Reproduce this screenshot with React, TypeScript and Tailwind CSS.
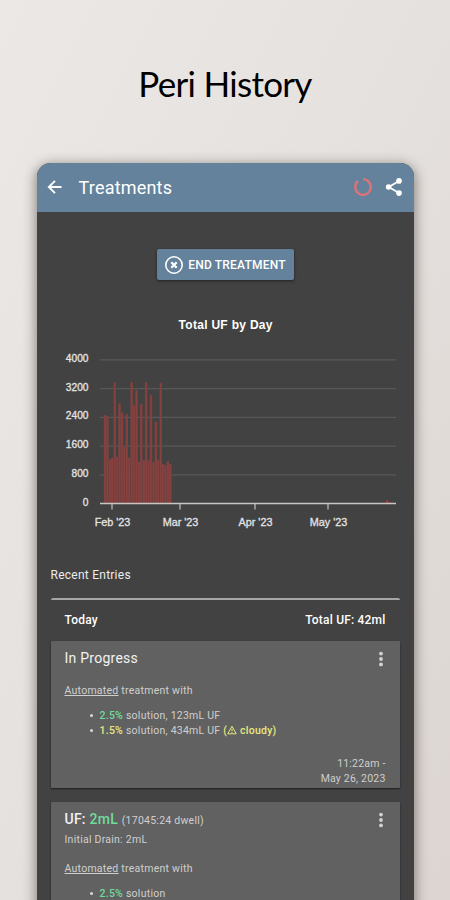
import { ReactNode } from 'react';

const DAILY_UF = [
  2460, 2430, 1235, 1270, 3385, 1300, 2785, 2535, 1560, 2485, 1280, 3385, 2740, 3155, 1160, 2765,
  1205, 3385, 1205, 3015, 1150, 2275, 1205, 3360, 1095, 1065, 1180, 1095,
];

const Y_TICKS = [4000, 3200, 2400, 1600, 800, 0];

const X_TICKS = [
  { label: "Feb '23", x: 75.5 },
  { label: "Mar '23", x: 143.5 },
  { label: "Apr '23", x: 218.5 },
  { label: "May '23", x: 291.5 },
];

const BASELINE = 193.5;
const yFor = (value: number) => BASELINE - (value * 143.6) / 4000;

function UfChart() {
  return (
    <svg viewBox="0 0 377 230" className="block h-[230px] w-full font-['Liberation_Sans',sans-serif]">
      <text x="188.5" y="19" textAnchor="middle" textLength="94" className="fill-white text-[12px] font-bold">
        Total UF by Day
      </text>
      {Y_TICKS.map((tick) => (
        <g key={tick}>
          <text
            x="51.5"
            y={yFor(tick) + 2}
            textAnchor="end"
            className="fill-[#e4e4e4] stroke-[#e4e4e4] stroke-[0.3] text-[10.2px]"
          >
            {tick}
          </text>
          {tick > 0 && <path d={`M63 ${yFor(tick)}H359`} stroke="#585858" strokeWidth="1.3" />}
        </g>
      ))}
      {DAILY_UF.map((value, i) => (
        <g key={i}>
          <rect x={66.8 + i * 2.42} y={yFor(value)} width="2.42" height={BASELINE - yFor(value)} fill="#7a403e" />
          <rect x={67.3 + i * 2.42} y={yFor(value)} width="1.5" height={BASELINE - yFor(value)} fill="#87413f" />
        </g>
      ))}
      <path d="M349 193v-3h2v2h3v1z" fill="#963b3a" />
      <path d={`M63 ${BASELINE}H359`} stroke="#c8c5c2" strokeWidth="1.4" />
      {X_TICKS.map((tick) => (
        <g key={tick.label}>
          <path d={`M${tick.x - 0.5} 194v5.5`} stroke="#c4c4c4" strokeWidth="1.2" />
          <text
            x={tick.x}
            y="215.5"
            textAnchor="middle"
            className="fill-[#e4e4e4] stroke-[#e4e4e4] stroke-[0.3] text-[10.8px]"
          >
            {tick.label}
          </text>
        </g>
      ))}
    </svg>
  );
}

function MoreIcon() {
  return (
    <svg viewBox="0 0 6 16" className="h-4 w-1.5 fill-[#d2d2d2]">
      <circle cx="3" cy="2.6" r="1.9" />
      <circle cx="3" cy="8" r="1.9" />
      <circle cx="3" cy="13.4" r="1.9" />
    </svg>
  );
}

function Entry({ title, children }: { title: ReactNode; children: ReactNode }) {
  return (
    <div className="h-[147px] rounded-[1px] bg-[#616161] pl-3.5 pr-3.5 shadow-[0_1px_2px_rgba(0,0,0,0.55)]">
      <div className="flex items-start justify-between pt-[9px] pr-0.5">
        <div className="text-[14px] leading-4 tracking-[0.25px] text-[#f2f2f2]">{title}</div>
        <div className="pt-px">
          <MoreIcon />
        </div>
      </div>
      {children}
    </div>
  );
}

export default function App() {
  return (
    <div className="flex h-[900px] w-[450px] flex-col overflow-hidden bg-linear-to-br from-[#ebe8e5] via-[#e5e1de] to-[#dcd5d1] font-[Roboto,sans-serif]">
      <h1 className="flex h-[163px] shrink-0 items-start justify-center pt-[61px] font-[Lato,sans-serif] text-[35px] leading-[44px] text-black">
        <span className="tracking-[-0.7px] whitespace-nowrap">Peri History</span>
      </h1>

      <div className="mx-auto h-[760px] w-[377px] shrink-0 overflow-hidden rounded-t-[14px] bg-[#424242] shadow-[0_3px_12px_2px_rgba(60,50,45,0.5)]">
        {/* App bar */}
        <header className="flex h-[49px] items-center bg-[#64829c] pr-[11px] pb-px pl-2.5 text-white">
          <svg viewBox="0 0 16 16" className="size-4" fill="none" stroke="currentColor" strokeWidth="1.9">
            <path d="M14.5 8H2M8 1.8 1.8 8 8 14.2" />
          </svg>
          <div className="ml-4 flex-1 text-[18px] tracking-[0.2px]">Treatments</div>
          <svg viewBox="0 0 20 20" className="size-5" fill="none" stroke="#d97478" strokeWidth="2.3">
            <path d="M10.2 2.2A7.8 7.8 0 1 1 5 4" />
          </svg>
          <svg viewBox="0 0 18 20" className="ml-3 h-5 w-[18px]" fill="currentColor">
            <path d="M3.8 10 14 4M3.8 10 14 16" stroke="currentColor" strokeWidth="1.8" />
            <circle cx="3.6" cy="10" r="2.8" />
            <circle cx="14" cy="3.9" r="2.8" />
            <circle cx="14" cy="16.1" r="2.8" />
          </svg>
        </header>

        <div className="flex justify-center pt-[37px]">
          <button className="flex h-[31px] w-[137px] items-center justify-center gap-1 rounded-[2px] bg-[#64829c] text-[12px] font-medium tracking-[0.2px] whitespace-nowrap text-white shadow-[0_1px_3px_rgba(0,0,0,0.5)]">
            <svg viewBox="0 0 20 20" className="size-5 shrink-0" fill="none" stroke="currentColor">
              <circle cx="10" cy="10" r="8.2" strokeWidth="1.6" />
              <path d="m7.3 7.3 5.4 5.4m0-5.4-5.4 5.4" strokeWidth="2.2" />
            </svg>
            END TREATMENT
          </button>
        </div>

        <div className="pt-[30px]">
          <UfChart />
        </div>

        <section className="px-3.5">
          <h2 className="pt-[27px] text-[12px] leading-4 tracking-[0.25px] text-[#ececec]">Recent Entries</h2>
          <div className="mt-[15px] h-[2px] rounded-t-sm bg-[#a6a6a6]" />
          <div className="flex h-[41px] items-center justify-between px-3.5 pb-0.5 text-[12px] font-medium tracking-[0.2px] text-white">
            <span>Today</span>
            <span>Total UF: 42ml</span>
          </div>

          <Entry title="In Progress">
            <p className="mt-4 text-[10.5px] leading-4 tracking-[0.25px] text-[#cfcfcf]">
              <span className="underline">Automated</span> treatment with
            </p>
            <ul className="mt-[9px] list-none pl-[25px] text-[10.5px] leading-[15px] tracking-[0.25px] text-[#cfcfcf]">
              <li className="flex items-center">
                <span className="mr-[7px] size-[3px] rounded-full bg-[#d8d8d8]" />
                <span>
                  <span className="font-medium text-[#6fdc9b]">2.5%</span> solution, 123mL UF
                </span>
              </li>
              <li className="flex items-center">
                <span className="mr-[7px] size-[3px] rounded-full bg-[#d8d8d8]" />
                <span className="whitespace-nowrap">
                  <span className="font-medium text-[#e8e87e]">1.5%</span> solution, 434mL UF{' '}
                  <span className="font-medium text-[#e8e87e]">
                    (
                    <svg
                      viewBox="0 0 10 10"
                      className="inline h-[10px] w-[10px] align-[-1px]"
                      fill="none"
                      stroke="currentColor"
                    >
                      <path d="M5 1.2 9.2 8.8H.8zM5 3.8v2.5M5 7v1" />
                    </svg>{' '}
                    cloudy)
                  </span>
                </span>
              </li>
            </ul>
            <p className="mt-[18px] text-right text-[10.5px] leading-[15px] tracking-[0.2px] text-[#cfcfcf]">
              11:22am -<br />
              May 26, 2023
            </p>
          </Entry>

          <div className="mt-[14px]">
            <Entry
              title={
                <>
                  <span className="font-medium">UF:</span> <span className="font-medium text-[#6fdc9b]">2mL</span>{' '}
                  <span className="text-[10.5px] text-[#cfcfcf]">(17045:24 dwell)</span>
                </>
              }
            >
              <p className="mt-[3px] text-[10.5px] leading-4 tracking-[0.25px] text-[#cfcfcf]">Initial Drain: 2mL</p>
              <p className="mt-[13px] text-[10.5px] leading-4 tracking-[0.25px] text-[#cfcfcf]">
                <span className="underline">Automated</span> treatment with
              </p>
              <ul className="mt-[9px] list-none pl-[25px] text-[10.5px] leading-[15px] tracking-[0.25px] text-[#cfcfcf]">
                <li className="flex items-center">
                  <span className="mr-[7px] size-[3px] rounded-full bg-[#d8d8d8]" />
                  <span>
                    <span className="font-medium text-[#6fdc9b]">2.5%</span> solution
                  </span>
                </li>
              </ul>
            </Entry>
          </div>
        </section>
      </div>
    </div>
  );
}
